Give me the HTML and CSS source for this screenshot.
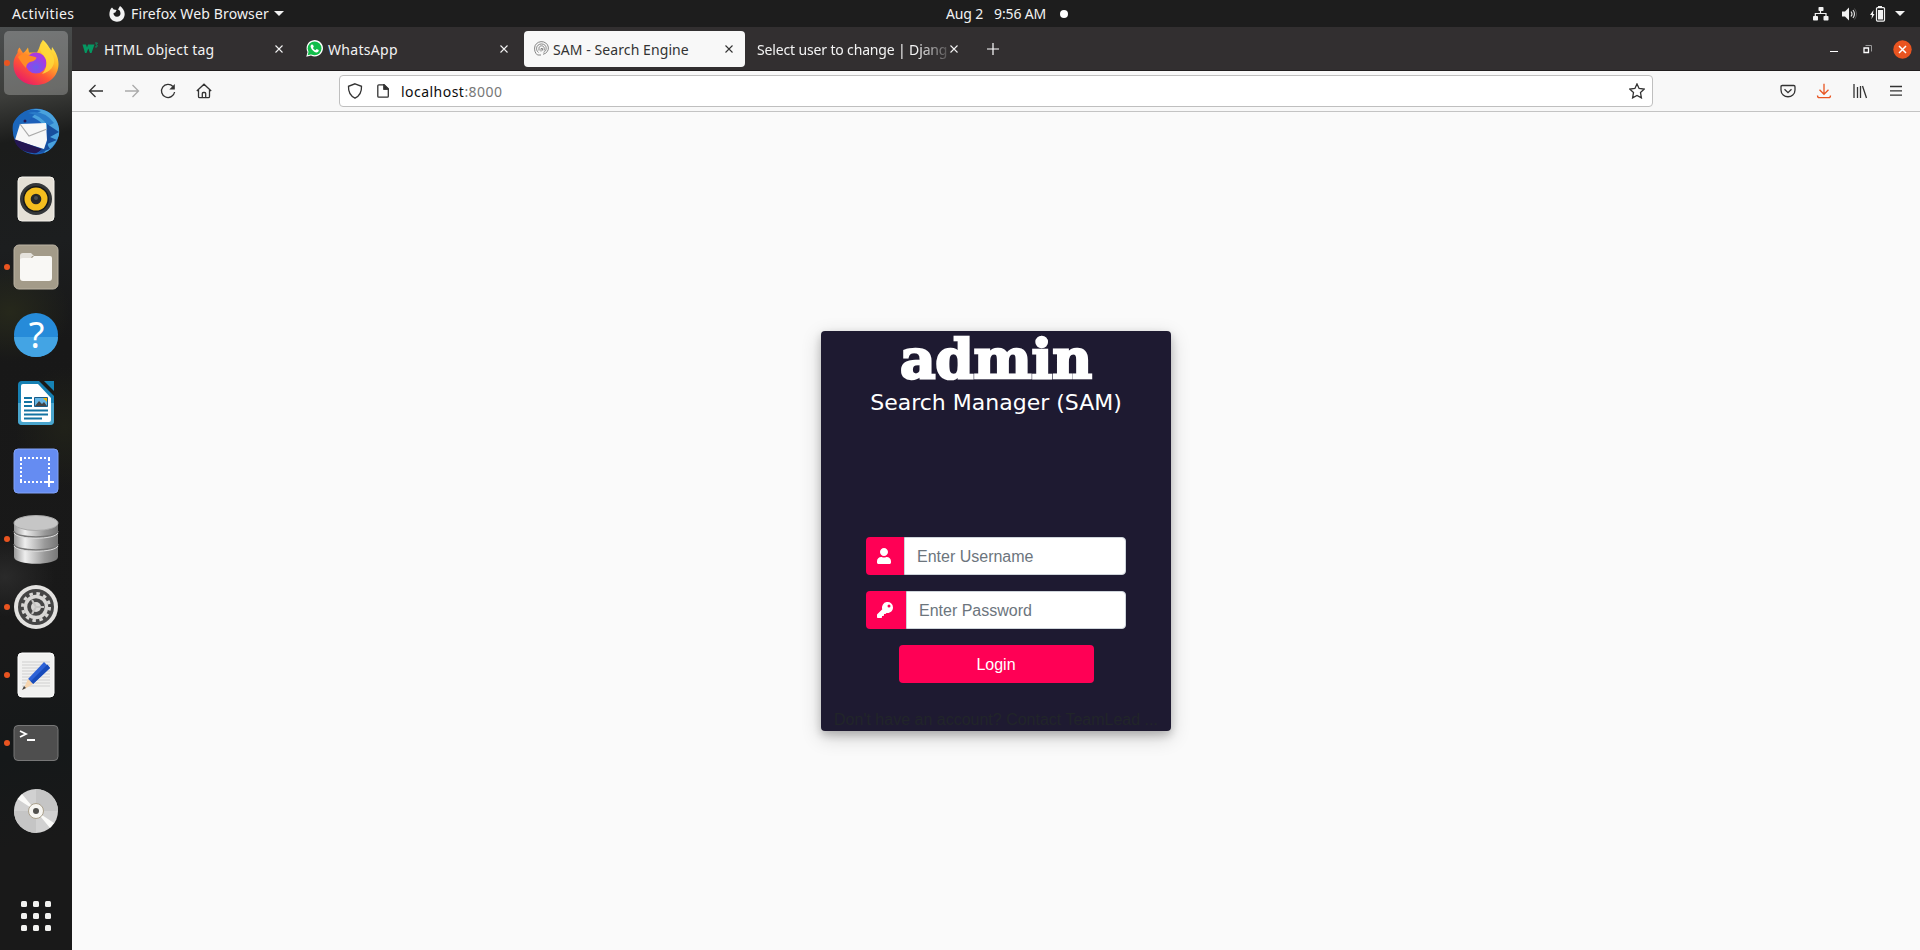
FILE: index.html
```
<!DOCTYPE html>
<html lang="en">
<head>
<meta charset="utf-8">
<title>SAM - Search Engine</title>
<link rel="stylesheet" href="styles.css">
</head>
<body>
<header class="panel">
  <span class="activities">Activities</span>
  <svg class="app-icon" width="16" height="16" viewBox="0 0 16 16"><path fill="#f2f2f2" d="M3 1.5 4.7 3.6 7.6 4 6.3 6.4 4.5 7C4.4 9 5.7 10.700 8 10.700 10.200 10.700 11.500 9.300 11.500 7.500 11.500 5 10.400 4 9 3.500L11 0C13.500 2 15.700 4.500 15.700 8 15.700 12.500 12.300 15.700 8 15.700 3.700 15.700.4 12.500.4 8.300.4 5.800 1.200 3 3 1.500Z"/></svg>
  <span class="app-name">Firefox Web Browser</span>
  <i class="caret"></i>
  <div class="clock"><span>Aug 2</span><span>9:56 AM</span><i class="notice"></i></div>
  <div class="tray">
    <svg width="16" height="14" viewBox="0 0 16 14" fill="#f2f2f2"><rect x="5.500" width="5" height="4" rx=".8"/><rect y="9" width="5" height="4.500" rx=".8"/><rect x="10.500" y="9" width="5" height="4.500" rx=".8"/><path d="M7.500 4v2.500H2.300V9M7.500 6.500H13V9" fill="none" stroke="#f2f2f2" stroke-width="1.200"/></svg>
    <svg class="volume" width="16" height="14" viewBox="0 0 16 14"><path fill="#f2f2f2" d="M0 4.500h3L7 .6v12.800L3 9.500H0z"/><path d="M9 4.500q2 2.500 0 5M11 3q3 4 0 8" fill="none" stroke="#ddd" stroke-width="1.200"/><path d="M12.500 1.500q4 5.500 0 11" fill="none" stroke="#555"/></svg>
    <svg class="battery" width="16" height="16" viewBox="0 0 16 16"><path fill="#f2f2f2" d="M3.500 4 0 9h2l-.5 4L4.500 8H3z"/><path fill="#f2f2f2" d="M8 0h4v2H8zM8 4h5v9.500H8z"/><rect x="6.500" y="1.600" width="8" height="13.500" rx="1" fill="none" stroke="#f2f2f2" stroke-width="1.200"/></svg>
    <i class="caret"></i>
  </div>
</header>
<div class="desktop">
  <nav class="dock">
    <div class="dock-item current running"><svg width="48" height="48" viewBox="0 0 48 48">
      <defs><linearGradient id="fx" x1=".85" y1="0" x2=".2" y2="1"><stop offset="0" stop-color="#fff44f"/><stop offset=".35" stop-color="#ffb928"/><stop offset=".65" stop-color="#ff5634"/><stop offset="1" stop-color="#e5156e"/></linearGradient><radialGradient id="globe" cx=".5" cy=".7"><stop offset="0" stop-color="#6a5cf0"/><stop offset="1" stop-color="#a93ae0"/></radialGradient></defs>
      <path fill="url(#fx)" d="M7.500 8.500 11 14l2-1.500 3-4 1 5 8 0 6-12.500C36 5 37 9 39.500 11.500L40 8c4 5 6.500 11 6.500 17 0 12-9.500 21-22.500 21S1.500 37.500 1.500 26c0-6.500 2-9 4-12 0-2.500.500-4 2-5.500z"/>
      <circle cx="24" cy="24" r="10.500" fill="url(#globe)"/>
      <path fill="#ff8b25" d="M6 18c4-4 7-4 10-2 3 1.500 6 1 8.500 2.500-.5 3-4 4-6.500 4.500-3 1.500-3.500 3-4 6-3-3-5-6-8-11z"/><path fill="#ffd83b" opacity=".85" d="M31 1c-6 7-3 11 1 16 4 5 3 13-2 18 8-2 13-8 12-15-1-7-9-9-11-19z"/></svg></div>
    <div class="dock-item"><svg width="50" height="50" viewBox="0 0 50 50">
      <circle cx="25" cy="25.500" r="23" fill="#1c5fb9"/><path fill="#49a2dd" d="M12 9C17 2 30 1 39 7c7 6 10 13 9 22-3 9-8 15-15 18 5-8 6-14 3-23C31 15 22 10 12 9z"/><path fill="#1b66bb" d="M2 18C7 6 19 1 30 5c-7 3-11 8-15 13L6 36C2 30 1 24 2 18z"/><path fill="#2a7cc9" d="M17 7q15-4 26 10l-6 3Q30 9 17 7z"/><path fill="#174e9d" d="m36 18 12 8-9 5 7 3-10 4 3 5-11 4 8-10z"/><path fill="#f7f7f7" d="m9 18 26-1 1 17-3 9L4 34z"/><path d="m9 18 9 12 18-7" fill="none" stroke="#aaa" stroke-width="1.200"/><path fill="#241652" d="m3 33 28 10c-3 3-6 5-9 4C11 46 5 41 3 33z"/><circle cx="14" cy="15" r="1.500" fill="#241652"/></svg></div>
    <div class="dock-item"><svg width="48" height="48" viewBox="0 0 48 48"><rect x="6" y="2" width="36" height="44" rx="4" fill="#e5e0d6" stroke="#f5f3ed"/><circle cx="24" cy="24" r="16" fill="#343638"/><circle cx="24" cy="24" r="13" fill="#171819"/><circle cx="24" cy="24" r="11.500" fill="#f4bd1e"/><circle cx="24" cy="24" r="5.300" fill="#252729"/><circle cx="24" cy="23" r="2" fill="#484b4f"/></svg></div>
    <div class="dock-item running"><svg width="48" height="48" viewBox="0 0 48 48"><rect x="2" y="2" width="44" height="44" rx="5" fill="#a39b89" stroke="#bbb3a3"/><path fill="#e5e2dc" d="M8 13q0-3 3-3h8l3 3h-2l-3 7H8z"/><path fill="#f9f8f5" d="M8 17q0-2 3-2h9l2-2h16q2 0 2 2v20q0 3-3 3H11q-3 0-3-3z"/></svg></div>
    <div class="dock-item"><svg width="48" height="48" viewBox="0 0 48 48"><circle cx="24" cy="24" r="22" fill="#268bd9"/><path fill="#43a4e4" d="M2 26h44a22 20 0 0 1-44 0z"/><text x="24.500" y="37" text-anchor="middle" class="help-mark">?</text></svg></div>
    <div class="dock-item"><svg width="48" height="48" viewBox="0 0 48 48"><path d="M6 6q0-4 4-4h17l15 15v25q0 4-4 4H10q-4 0-4-4z" fill="#1680b3"/><path fill="#4aa5cd" d="M6 24h36v18q0 4-4 4H10q-4 0-4-4z"/><path fill="#fff" d="M9 7q0-2 2-2h15l13 14v22q0 2-2 2H11q-2 0-2-2z"/><path fill="#1683b5" d="M32 2h10v10z"/><path d="M12 19h8M12 23h8M12 27h8M12 31.500h24M12 35.500h24M12 39.500h18" stroke="#1373a2" stroke-width="2"/><path fill="#65b5e4" stroke="#185b87" d="M22.500 18.500h13v9h-13z"/><path fill="#444" d="m23 27 4-5 3 3 2-2 3 4z"/><path fill="#f4b400" d="M31 19h4v4z"/></svg></div>
    <div class="dock-item"><svg width="48" height="48" viewBox="0 0 48 48"><rect x="2" y="2" width="44" height="44" rx="4" fill="#658cf2" stroke="#82a2f8"/><path d="M8 11h30M37 12v20M9 12v24M8 35h22" fill="none" stroke="#fff" stroke-width="2" stroke-dasharray="2 2"/><path d="M37 30v10M32 35h10" stroke="#fff" stroke-width="2"/></svg></div>
    <div class="dock-item running"><svg width="48" height="50" viewBox="0 0 48 50"><defs><linearGradient id="metal"><stop stop-color="#999"/><stop offset=".25" stop-color="#eee"/><stop offset=".7" stop-color="#999"/><stop offset="1" stop-color="#777"/></linearGradient></defs><path fill="url(#metal)" d="M2 9h44v34c0 9-44 9-44 0z"/><ellipse cx="24" cy="9" rx="22" ry="7.500" fill="#c6c6c6" stroke="#aaa"/><path d="M2 17c0 8 44 8 44 0M2 30c0 8 44 8 44 0" fill="none" stroke="#777" stroke-width="1.500"/><path d="M2 19c3 7 41 7 44 0M2 32c3 7 41 7 44 0" fill="none" stroke="#ddd"/></svg></div>
    <div class="dock-item running"><svg width="48" height="48" viewBox="0 0 48 48"><circle cx="24" cy="24" r="22" fill="#e3e2e0"/><circle cx="24" cy="24" r="18" fill="#454545"/><circle cx="24" cy="24" r="13.500" fill="none" stroke="#d8d7d5" stroke-width="3" stroke-dasharray="3.500 3.568"/><circle cx="24" cy="24" r="10.500" fill="none" stroke="#d8d7d5" stroke-width="3.500"/><circle cx="24" cy="24" r="5" fill="#d8d7d5"/><path d="m20 17 4 7h8M24 24l-4 7" fill="none" stroke="#c5c4c2" stroke-width="2"/></svg></div>
    <div class="dock-item running"><svg width="48" height="48" viewBox="0 0 48 48"><rect x="6" y="2" width="36" height="44" rx="4" fill="#f1f1f0" stroke="#fff"/><path d="M10 11h28M10 14h28M10 17h28M10 20h28M10 23h28M10 26h28M10 29h28M10 32h28M10 35h28" stroke="#cfcfcf"/><path fill="#2d62d6" d="m16 28 16-17 6 6-17 16z"/><path fill="#174bba" d="m18.500 30.500 17-17 2.500 3.500-17 16z"/><path fill="#f6d5af" d="m16 28 5 5-10 6z"/><path fill="#444" d="m12 35 2 2-4 2z"/></svg></div>
    <div class="dock-item running"><svg width="48" height="48" viewBox="0 0 48 48"><rect x="2" y="6.500" width="44" height="35" rx="4" fill="#4e4e4e" stroke="#777"/><path d="m8 12 6 3-6 3M15 21h8" fill="none" stroke="#fff" stroke-width="1.800"/></svg></div>
    <div class="dock-item"><svg width="48" height="48" viewBox="0 0 48 48"><circle cx="24" cy="24" r="22" fill="#d1d1d1"/><path fill="#c5c5c5" d="M24 24V2a22 22 0 0 1 22 22zM24 24v22A22 22 0 0 1 2 24z"/><path fill="#fafaf8" d="M24 24 5.500 12 10 7zm0 0 18 12-4 5z"/><circle cx="24" cy="24" r="7.500" fill="#f7f6f2" stroke="#aaa08b"/><circle cx="24" cy="24" r="3" fill="#51504d"/></svg></div>
    <div class="apps-grid"><i></i><i></i><i></i><i></i><i></i><i></i><i></i><i></i><i></i></div>
  </nav>
  <main class="browser">
    <div class="tabs">
      <div class="tab tab-docs"><svg width="17" height="14" viewBox="0 0 17 14"><path d="M.5 2.500H4L5 5.500 6 2.500h6.500L9.500 11H8L6.300 6.500 4.500 11H3z" fill="#059862"/><path d="M13 1h2.500L14 2.700q2 .5 1 2-1 1-2 0" fill="none" stroke="#059862" stroke-width=".9"/></svg><span class="title title-docs">HTML object tag</span><svg class="x" width="8" height="8" viewBox="0 0 8 8"><path d="m.5.5 7 7m0-7-7 7"/></svg></div>
      <div class="tab tab-wa"><svg width="17" height="17" viewBox="0 0 17 17"><path fill="#fff" d="M.3 16.700 1.500 12A8.200 8.200 0 1 1 5 15.500z"/><circle cx="8.600" cy="8.300" r="6.900" fill="#12bd4a"/><path fill="#12bd4a" d="m1.700 15.300 1-4 3 3z"/><path fill="#fff" d="M5.500 4.500 7 4.700l.8 2-.9 1.200q1 1.600 2.600 2.300l1.200-1.200 2 1c.2 1.500-.9 2.500-2.300 2.500C7.800 12 5 9 4.600 6.800c0-1 .2-1.700.9-2.300z"/></svg><span class="title title-wa">WhatsApp</span><svg class="x" width="8" height="8" viewBox="0 0 8 8"><path d="m.5.5 7 7m0-7-7 7"/></svg></div>
      <div class="tab active"><svg width="15" height="15" viewBox="0 0 15 15" fill="none" stroke="#777" stroke-width=".9"><path d="M3.500 14C1 12 .5 9.500.6 7A6.900 6.400 0 1 1 9 13.300M3.500 14H7M4.500 11.500C2 9.500 2 6 4 4.200 6 2.500 9.500 2.500 11.300 4.500 13 7 12 10.500 9.500 11.300M5 9.500V7.300C5 4 10.200 4 10.200 7.300V9.500M7 10.500V7.500h1.500v2"/></svg><span class="title title-sam">SAM - Search Engine</span><svg class="x" width="8" height="8" viewBox="0 0 8 8"><path d="m.5.5 7 7m0-7-7 7"/></svg></div>
      <div class="tab tab-users"><span class="title title-users">Select user to change | Djang</span><svg class="x" width="8" height="8" viewBox="0 0 8 8"><path d="m.5.5 7 7m0-7-7 7"/></svg></div>
      <svg class="new-tab" width="12" height="12" viewBox="0 0 12 12"><path d="M6 0v12M0 6h12" stroke="#fff" stroke-width="1.200"/></svg>
      <div class="window-buttons">
        <i class="minimise"></i>
        <svg width="9" height="9" viewBox="0 0 9 9" fill="none"><path d="M2.500.5h6v6" stroke="#999"/><path d="M1 3h4.500v4.500H1z" stroke="#fff" stroke-width="1.300"/></svg>
        <svg width="19" height="19" viewBox="0 0 19 19"><circle cx="9.500" cy="9.500" r="9.200" fill="#e95420"/><path d="m6 6 7 7m0-7-7 7" stroke="#fff" stroke-width="1.500"/></svg>
      </div>
    </div>
    <div class="toolbar">
      <div class="nav-buttons">
        <svg width="16" height="16" viewBox="0 0 16 16"><path d="M15 8H1.500m6-6-6 6 6 6"/></svg>
        <svg class="off" width="16" height="16" viewBox="0 0 16 16"><path d="M1 8h13.500m-6-6 6 6-6 6"/></svg>
        <svg width="16" height="16" viewBox="0 0 16 16"><path d="M13 3.500A6.600 6.600 0 1 0 14.600 9"/><path d="M14.800 1v5.500H9.300z" fill="#333" stroke="none"/></svg>
        <svg width="16" height="16" viewBox="0 0 16 16"><path d="M.8 8 8 1.200 15.200 8M2.500 7v6.500q0 1.200 1.200 1.200h8.600q1.200 0 1.200-1.200V7M6.300 14.700V10.500q0-1 1-1h1.400q1 0 1 1v4.200"/></svg>
      </div>
      <div class="address">
        <svg width="16" height="16" viewBox="0 0 16 16"><path d="M8 .8 14.500 3.300C14.800 9 12.500 13 8 15.200 3.500 13 1.200 9 1.500 3.300z"/></svg>
        <svg class="page-icon" width="12" height="14" viewBox="0 0 12 14"><path d="M1.800.8h5.500l4 4v7.400q0 1-1 1H1.800q-1 0-1-1V1.800q0-1 1-1zM7 .8V5h4.300z"/><path d="M7 1v4h4z" fill="#222"/></svg>
        <span class="url"><b>localhost</b>:8000</span>
        <svg class="star" width="16" height="16" viewBox="0 0 16 16"><path d="m8 .9 2.100 4.600 5 .6-3.600 3.500.9 5.300L8 12.400l-4.400 2.500.9-5.300L.9 6.100l5-.6z"/></svg>
      </div>
      <div class="actions">
        <svg width="16" height="16" viewBox="0 0 16 16"><path d="M2.200 2.500h11.600q1.200 0 1.200 1.200V7c0 9-14 9-14 0V3.700q0-1.200 1.200-1.200zM4.500 6.300 8 9.700l3.500-3.400"/></svg>
        <svg class="download" width="16" height="16" viewBox="0 0 16 16"><path d="M8 .8v10.500M3.500 6.800 8 11.300l4.500-4.500M1.500 12.500q0 2.200 2 2.200h9q2 0 2-2.200"/></svg>
        <svg width="16" height="16" viewBox="0 0 16 16"><path d="M2 1v14M5.500 4v11M8.500 3v12M10.500 3l4 12"/></svg>
        <svg width="16" height="16" viewBox="0 0 16 16"><path d="M2 3.500h12M2 7.800h12M2 12.100h12"/></svg>
      </div>
    </div>
    <section class="page">
      <form class="card">
        <h1 class="brand">admin</h1>
        <h2 class="subtitle">Search Manager (SAM)</h2>
        <div class="fields">
          <label class="field"><span class="addon"><svg width="14" height="16" viewBox="0 0 448 512"><path fill="#fff" d="M224 256c70.700 0 128-57.300 128-128S294.700 0 224 0 96 57.300 96 128s57.300 128 128 128zm89.600 32h-16.700a174 174 0 0 1-145.800 0h-16.700C60.200 288 0 348.200 0 422.400V464c0 26.500 21.500 48 48 48h352c26.500 0 48-21.500 48-48v-41.600c0-74.200-60.200-134.400-134.400-134.400z"/></svg></span><input type="text" placeholder="Enter Username"></label>
          <label class="field"><span class="addon"><svg width="16" height="16" viewBox="0 0 512 512"><path fill="#fff" d="M512 176c0 97.200-78.800 176-176 176-11.200 0-22.200-1.100-32.800-3.100l-24 27a24 24 0 0 1-18 8.100H224v40c0 13.300-10.700 24-24 24h-40v40c0 13.300-10.700 24-24 24H24c-13.300 0-24-10.700-24-24v-78.100c0-6.400 2.500-12.500 7-17l161.800-161.800A176 176 0 1 1 512 176zM336 128a48 48 0 1 0 96 0 48 48 0 0 0-96 0z"/></svg></span><input type="password" placeholder="Enter Password"></label>
          <button class="login" type="button">Login</button>
        </div>
        <p class="signup">Don't have an account? Contact TeamLead ...</p>
      </form>
    </section>
  </main>
</div>
</body>
</html>
```

FILE: styles.css
```
* { box-sizing: border-box; }
body { margin: 0; width: 1920px; height: 950px; overflow: hidden; font-family: "Noto Sans", sans-serif; font-size: 14px; background: #fafafa; }
svg { display: block; flex: none; }
.panel { height: 27px; background: #1d1d1d; color: #f2f2f2; display: flex; align-items: center; padding: 0 15px 0 12px; position: relative; }
.activities { width: 97px; letter-spacing: .4px; }
.app-icon { margin-right: 6px; }
.app-name { letter-spacing: .13px; width: 138px; white-space: nowrap; }
.caret { border: 5px solid transparent; border-top-color: #f2f2f2; border-bottom: 0; margin-left: 5px; }
.clock { position: absolute; left: 946px; display: flex; align-items: center; gap: 11px; white-space: nowrap; letter-spacing: -.15px; }
.notice { width: 8px; height: 8px; border-radius: 50%; background: #fff; margin-left: 3px; }
.tray { margin-left: auto; display: flex; align-items: center; }
.volume { margin-left: 13px; }
.battery { margin-left: 12px; }
.tray .caret { margin-left: 9px; }
.desktop { display: flex; height: 923px; }
.dock { width: 72px; padding-top: 4px; display: flex; flex-direction: column; align-items: center; gap: 4px; background: radial-gradient(ellipse 60px 50px at 10px 285px, #26281b, transparent), radial-gradient(ellipse 50px 60px at 65px 400px, #202119, transparent), radial-gradient(ellipse 50px 40px at 5px 550px, #2a2a2a, transparent), linear-gradient(170deg, #4b4e4f 0, #3c3d3a 70px, #1b1c1b 115px, #1c1e1f 220px, #181818 320px, #191919 600px, #151819 720px, #191919 810px); }
.dock-item { width: 64px; height: 64px; border-radius: 5px; display: flex; align-items: center; justify-content: center; flex: none; position: relative; }
.current { background: rgba(255, 255, 255, .24); }
.running::before { content: ""; position: absolute; left: 0; top: 29px; width: 6px; height: 6px; border-radius: 50%; background: #e95420; }
.help-mark { font: 36px "Noto Sans", sans-serif; fill: #fff; }
.apps-grid { display: grid; grid-template-columns: repeat(3, 6px); grid-auto-rows: 6px; gap: 6px; margin-top: 54px; }
.apps-grid i { background: #f2f2f0; border-radius: 1.5px; }
.browser { flex: 1; display: flex; flex-direction: column; }
.tabs { height: 44px; background: #322f30; border-bottom: 1px solid #201d1e; display: flex; align-items: center; padding: 0 8px 0 0; color: #f3f3f3; }
.tab { width: 221px; height: 36px; margin-right: 4px; padding: 0 12px 0 10px; border-radius: 4px; display: flex; align-items: center; }
.tab-docs { margin-left: 2px; padding-left: 8px; }
.tab-wa { padding-left: 7px; }
.title { flex: 1; padding-top: 2px; white-space: nowrap; }
.title-docs { margin-left: 5px; letter-spacing: .2px; }
.title-wa { margin-left: 5px; letter-spacing: .3px; }
.title-sam { margin-left: 4px; letter-spacing: .08px; }
.title-users { letter-spacing: -.15px; -webkit-mask-image: linear-gradient(to right, #000 160px, transparent 197px); mask-image: linear-gradient(to right, #000 160px, transparent 197px); }
.tab-users { padding-left: 8px; }
.active { background: #f8f8f8; color: #333; }
.x path { stroke: currentColor; stroke-width: 1.1; }
.new-tab { margin-left: 13px; }
.window-buttons { margin-left: auto; display: flex; align-items: center; padding-top: 1px; }
.minimise { width: 8px; height: 1px; background: #fff; margin: 4px 25px 0 0; }
.window-buttons svg + svg { margin-left: 21px; }
.toolbar { height: 41px; background: #f8f8f8; border-bottom: 1px solid #c3c3c3; display: flex; align-items: center; padding: 0 16px; }
.toolbar svg { fill: none; stroke: #333; stroke-width: 1.3; }
.nav-buttons { display: flex; gap: 20px; width: 251px; }
.toolbar .off { stroke: #aaa; }
.address { width: 1314px; height: 32px; background: #fff; border: 1px solid #bfbfbf; border-radius: 4px; display: flex; align-items: center; padding: 0 7px; }
.page-icon { margin-left: 14px; }
.url { margin-left: 12px; color: #777; letter-spacing: .47px; }
.url b { font-weight: 400; color: #0c0c0d; }
.star { margin-left: auto; }
.actions { margin-left: auto; display: flex; gap: 20px; }
.toolbar .download { stroke: #e95420; }
.page { flex: 1; display: flex; align-items: center; justify-content: center; background: #fafafa; }
.card { width: 350px; height: 400px; background: #1e1a31; border-radius: 4px; box-shadow: 0 4px 8px rgba(0, 0, 0, .2), 0 6px 20px rgba(0, 0, 0, .19); display: flex; flex-direction: column; align-items: center; font-family: "Liberation Sans", sans-serif; font-size: 16px; }
.brand { margin: 1px 0 0; height: 54px; font: bold 55px/54px "DejaVu Serif", serif; letter-spacing: -.2px; color: #fff; -webkit-text-stroke: 2.4px #fff; }
.subtitle { margin: 4px 0 0; height: 26px; font: 400 22px/26px "DejaVu Sans", sans-serif; color: #fff; white-space: nowrap; }
.fields { width: 260px; margin-top: 121px; display: flex; flex-direction: column; align-items: center; gap: 16px; }
.field { width: 260px; height: 38px; display: flex; }
.addon { padding: 0 13px 0 11px; background: #ff0055; border-radius: 4px 0 0 4px; display: flex; align-items: center; }
.field input { flex: 1; min-width: 0; border: 1px solid #ced4da; border-radius: 0 4px 4px 0; padding: 1px 12px 0; font: inherit; background: #fff; }
.field input::placeholder { color: #6c757d; opacity: 1; }
.login { width: 195px; height: 38px; padding: 2px 0 0; border: 0; border-radius: 4px; background: #ff0055; color: #fff; font: inherit; }
.signup { margin: 25px 0 0; line-height: 24px; color: #212529; white-space: nowrap; }
```
